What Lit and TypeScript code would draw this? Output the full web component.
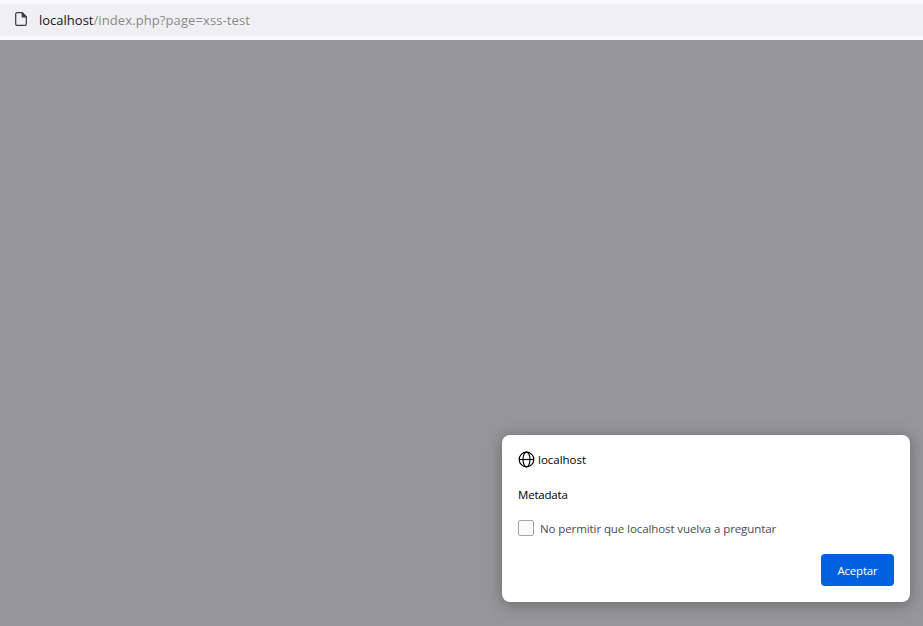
import { LitElement, html, css } from "lit";
import { customElement } from "lit/decorators.js";

@customElement("app-root")
export class AppRoot extends LitElement {
  static styles = css`
    :host {
      display: flex;
      flex-direction: column;
      width: 923px;
      height: 626px;
      overflow: hidden;
      background: #f9f9fb;
      font-family: "Open Sans", "Noto Sans", sans-serif;
      color: #15141a;
    }
    .toolbar {
      flex: none;
      height: 40px;
      box-sizing: border-box;
      padding: 4px 0;
    }
    .urlbar {
      height: 32px;
      background: #f0f0f4;
      display: flex;
      align-items: center;
      padding-left: 15px;
      gap: 12px;
      font-size: 13px;
    }
    .page-icon { width: 12px; height: 14px; flex: none; margin-top: -2px; }
    .host { color: #15141a; letter-spacing: 0; }
    .path { color: #8a8a8e; letter-spacing: 0.1px; }
    .backdrop {
      flex: 1;
      background: #969599;
      display: flex;
      justify-content: flex-end;
      align-items: flex-end;
      padding: 0 13px 24px 0;
    }
    .dialog {
      width: 408px;
      height: 167px;
      box-sizing: border-box;
      background: #fff;
      border-radius: 8px;
      box-shadow: 0 2px 14px rgba(58, 57, 68, 0.5);
      padding: 15px 16px 16px;
      display: flex;
      flex-direction: column;
    }
    .head {
      display: flex;
      align-items: center;
      gap: 3px;
      font-size: 11.5px;
      letter-spacing: -0.01px;
      height: 18px;
      color: #000;
    }
    .globe { width: 17px; height: 17px; flex: none; }
    .msg {
      margin-top: 18px;
      font-size: 11.5px;
      letter-spacing: -0.2px;
      height: 18px;
      line-height: 18px;
      color: #000;
    }
    .check {
      margin-top: 16px;
      display: flex;
      align-items: center;
      gap: 6px;
      font-size: 11.5px;
      letter-spacing: -0.09px;
      color: #4a4a4f;
      height: 16px;
    }
    .box {
      width: 14px;
      height: 14px;
      border: 1px solid #a5a5a8;
      border-radius: 2px;
      background: #f9f9fb;
      flex: none;
    }
    .actions {
      margin-top: auto;
      display: flex;
      justify-content: flex-end;
    }
    .accept {
      width: 73px;
      height: 32px;
      border: 0;
      border-radius: 4px;
      background: #0061e0;
      color: #fff;
      font: inherit;
      font-size: 11.5px;
      letter-spacing: -0.2px;
      padding: 0;
    }
  `;

  render() {
    return html`
      <div class="toolbar">
        <div class="urlbar">
          <svg class="page-icon" viewBox="0 0 12 14" fill="none" stroke="#3a3944" stroke-width="1.2" stroke-linejoin="round">
            <path d="M2 .7h5.2L11.3 4.8V12a1.3 1.3 0 0 1-1.3 1.3H2A1.3 1.3 0 0 1 .7 12V2A1.3 1.3 0 0 1 2 .7z" />
            <path d="M7.2.7V4.8h4.1L7.2.7z" fill="#3a3944" />
          </svg>
          <div><span class="host">localhost</span><span class="path">/index.php?page=xss-test</span></div>
        </div>
      </div>
      <div class="backdrop">
        <div class="dialog">
          <div class="head">
            <svg class="globe" viewBox="0 0 16 16" fill="none" stroke="#000" stroke-width="1.1">
              <circle cx="8" cy="8" r="6.9" />
              <ellipse cx="8" cy="8" rx="3.3" ry="6.9" />
              <path d="M1.1 8h13.8" />
            </svg>
            <span>localhost</span>
          </div>
          <div class="msg">Metadata</div>
          <div class="check"><span class="box"></span><span>No permitir que localhost vuelva a preguntar</span></div>
          <div class="actions"><button class="accept">Aceptar</button></div>
        </div>
      </div>
    `;
  }
}
